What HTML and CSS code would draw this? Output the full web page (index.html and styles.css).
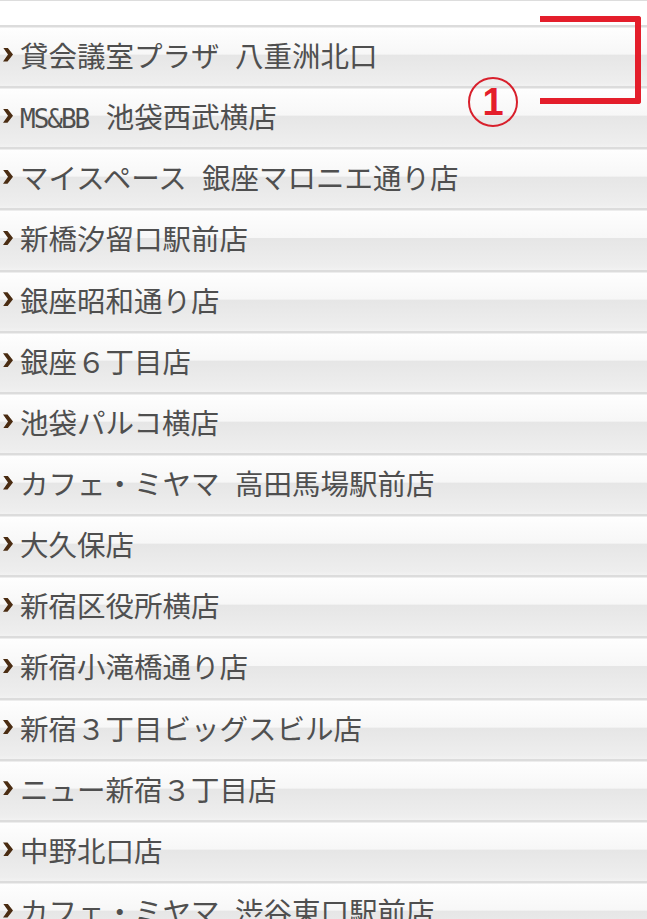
FILE: index.html
```html
<!DOCTYPE html>
<html lang="ja">
<head>
  <meta charset="UTF-8" />
  <title>店舗一覧</title>
  <link rel="stylesheet" href="styles.css">
</head>
<body>

<div class="page">
  <div class="top-strip"></div>

  <ul class="shop-list">
    <li><span class="arrow"></span><span class="name">貸会議室プラザ 八重洲北口</span></li>
    <li><span class="arrow"></span><span class="name"><span class="latin">MS&amp;BB</span> 池袋西武横店</span></li>
    <li><span class="arrow"></span><span class="name">マイスペース 銀座マロニエ通り店</span></li>
    <li><span class="arrow"></span><span class="name">新橋汐留口駅前店</span></li>
    <li><span class="arrow"></span><span class="name">銀座昭和通り店</span></li>
    <li><span class="arrow"></span><span class="name">銀座６丁目店</span></li>
    <li><span class="arrow"></span><span class="name">池袋パルコ横店</span></li>
    <li><span class="arrow"></span><span class="name">カフェ・ミヤマ 高田馬場駅前店</span></li>
    <li><span class="arrow"></span><span class="name">大久保店</span></li>
    <li><span class="arrow"></span><span class="name">新宿区役所横店</span></li>
    <li><span class="arrow"></span><span class="name">新宿小滝橋通り店</span></li>
    <li><span class="arrow"></span><span class="name">新宿３丁目ビッグスビル店</span></li>
    <li><span class="arrow"></span><span class="name">ニュー新宿３丁目店</span></li>
    <li><span class="arrow"></span><span class="name">中野北口店</span></li>
    <li><span class="arrow"></span><span class="name">カフェ・ミヤマ 渋谷東口駅前店</span></li>
  </ul>

  <!-- annotation drawn over the list -->
  <div class="bracket"></div>
  <div class="marker">1</div>
</div>

</body>
</html>
```

FILE: styles.css
```css
body {
  margin: 0;
  padding: 0;
  background: #fff;
  overflow: hidden;
}

.page {
  position: relative;
  width: 647px;
  height: 919px;
  overflow: hidden;
}

.top-strip {
  height: 25px;
  background: #fff;
  border-top: 1px solid #dddddd;
  box-sizing: border-box;
}

.shop-list {
  list-style: none;
  margin: 0;
  padding: 0;
}

.shop-list li {
  display: flex;
  align-items: center;
  height: 61.15px;
  box-sizing: border-box;
  padding-left: 3px;
  padding-bottom: 2px;
  font-family: "Noto Sans CJK JP", sans-serif;
  font-size: 28.5px;
  color: #4f4f4f;
  white-space: nowrap;
  background: linear-gradient(to bottom,
    #dcdcdc 0, #dcdcdc 2px,
    #fefefe 3px, #f7f7f7 48%,
    #e6e6e6 49%, #eeeeee 94%, #f2f2f2 100%);
}

.name {
  word-spacing: 9px;
}

.latin {
  font-family: "DejaVu Sans Mono", monospace;
  font-size: 26px;
  letter-spacing: -2px;
  margin-right: 2px;
}

.arrow {
  display: inline-block;
  flex-shrink: 0;
  width: 10px;
  height: 14px;
  margin-right: 7px;
  background: #4a2c12;
  clip-path: polygon(0 0, 45% 0, 100% 50%, 45% 100%, 0 100%, 50% 50%);
}

.bracket {
  position: absolute;
  left: 540px;
  top: 16px;
  width: 95px;
  height: 76px;
  border: 6px solid #e41e2b;
  border-left: none;
  border-radius: 0 3px 3px 0;
}

.marker {
  position: absolute;
  left: 468px;
  top: 77px;
  width: 46px;
  height: 46px;
  border: 2px solid #d8202c;
  border-radius: 50%;
  text-align: center;
  font-family: "Liberation Sans", sans-serif;
  font-weight: bold;
  font-size: 38px;
  line-height: 47px;
  color: #e41e2b;
}
```
